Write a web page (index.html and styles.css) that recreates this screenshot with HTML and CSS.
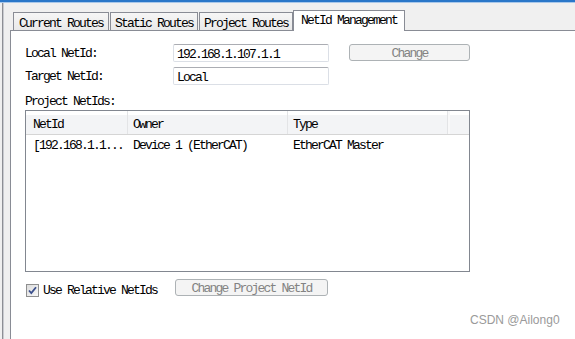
FILE: index.html
```html
<!DOCTYPE html>
<html lang="en">
<head>
    <meta charset="UTF-8" />
    <title>NetId Management</title>
    <link rel="stylesheet" href="styles.css">
</head>
<body>
    <div class="titlebar"></div>

    <div class="window">
        <div class="tabs">
            <div class="tab">Current Routes</div>
            <div class="tab">Static Routes</div>
            <div class="tab">Project Routes</div>
            <div class="tab active">NetId Management</div>
        </div>

        <div class="page">
            <div class="field">
                <span class="label">Local NetId:</span>
                <div class="input">192.168.1.107.1.1</div>
                <div class="btn btn-change">Change</div>
            </div>
            <div class="field">
                <span class="label">Target NetId:</span>
                <div class="input">Local</div>
            </div>

            <div class="caption">Project NetIds:</div>

            <div class="list">
                <div class="list-head">
                    <div class="col c1">NetId</div>
                    <div class="col c2">Owner</div>
                    <div class="col c3">Type</div>
                    <div class="col rest"></div>
                </div>
                <div class="list-row">
                    <div class="col c1">[192.168.1.1...</div>
                    <div class="col c2">Device 1 (EtherCAT)</div>
                    <div class="col c3">EtherCAT Master</div>
                </div>
            </div>

            <div class="bottom-row">
                <label class="check-group">
                    <span class="checkbox">
                        <svg width="11" height="11" viewBox="0 0 11 11">
                            <path d="M2 5.5 L4.3 8 L9 2.2" fill="none" stroke="#3b4f8c" stroke-width="1.8"/>
                        </svg>
                    </span>
                    <span>Use Relative NetIds</span>
                </label>
                <div class="btn btn-project">Change Project NetId</div>
            </div>
        </div>
    </div>

    <div class="watermark">CSDN @Ailong0</div>
</body>
</html>
```

FILE: styles.css
```css
:root {
    --panel: #f0f0f0;
    --edge: #898c95;
    --text: #000000;
    --muted: #838383;
}

body {
    margin: 0;
    width: 575px;
    height: 339px;
    overflow: hidden;
    position: relative;
    background: var(--panel);
    color: var(--text);
    font-family: "Liberation Mono", "DejaVu Sans Mono", monospace;
    font-size: 13px;
    letter-spacing: -1.8px;
}

.titlebar {
    height: 2px;
    background: #2a77c9;
    border-bottom: 1px solid #a9c8ea;
}

.window {
    height: 336px;
    margin-left: 2px;
    border-left: 1px solid #8d8f95;
    box-shadow: inset 1px 0 #c9cbd0;
    padding-left: 7px;
    display: flex;
    flex-direction: column;
}

/* tab strip */
.tabs {
    height: 27px;
    padding-left: 3px;
    display: flex;
    align-items: flex-end;
}

.tab {
    height: 14px;
    padding: 3px 4px 0 4px;
    line-height: 15px;
    border: 1px solid var(--edge);
    border-bottom: none;
    background: linear-gradient(#f6f6f6, #e9e9e9);
    margin-right: 1px;
    white-space: nowrap;
}

.tab:first-child {
    padding: 3px 5px 0 5px;
}

.tab.active {
    height: 18px;
    padding: 2px 7px 0 7px;
    background: #ffffff;
    margin-left: -1px;
    margin-bottom: -1px;
    position: relative;
    z-index: 1;
}

/* page */
.page {
    flex: 1;
    display: flex;
    flex-direction: column;
    align-items: flex-start;
    background: #ffffff;
    border-top: 1px solid var(--edge);
    border-left: 1px solid var(--edge);
    padding: 13px 0 0 14px;
}

.field {
    display: flex;
    align-items: flex-start;
    height: 18px;
    margin-bottom: 5px;
}

.label {
    width: 148px;
    line-height: 20px;
}

.input {
    box-sizing: border-box;
    width: 156px;
    height: 18px;
    line-height: 17px;
    padding: 1px 0 0 3px;
    border: 1px solid #dbdfe6;
    border-top-color: #abadb3;
    border-radius: 2px;
    overflow: hidden;
}

.btn {
    box-sizing: border-box;
    height: 17px;
    line-height: 16px;
    padding-top: 1px;
    text-align: center;
    color: var(--muted);
    background: #f4f4f4;
    border: 1px solid #adb2b5;
    border-radius: 3px;
}

.btn-change {
    width: 121px;
    margin-left: 20px;
}

.caption {
    margin-top: 4px;
    line-height: 16px;
}

/* list view */
.list {
    box-sizing: border-box;
    width: 445px;
    height: 162px;
    border: 1px solid #828790;
}

.list-head {
    display: flex;
    height: 23px;
    border-bottom: 1px solid #d5d5d5;
    background: linear-gradient(#ffffff 0, #ffffff 4px, #f3f4f6 4px);
}

.list-head .col {
    padding-top: 5px;
    line-height: 18px;
    border-right: 1px solid #e3e4e6;
}

.list-row {
    display: flex;
    height: 16px;
    line-height: 16px;
    margin-top: 3px;
}

.col {
    box-sizing: border-box;
    padding-left: 5px;
    white-space: nowrap;
}

.c1 { width: 102px; padding-left: 7px; }
.c2 { width: 160px; }
.c3 { width: 160px; }

.list-head .c3 {
    box-shadow: 2px 0 0 #f8f8f9;
}

.list-head .rest {
    flex: 1;
    border-right: none;
}

/* bottom controls */
.bottom-row {
    display: flex;
    align-items: flex-start;
    margin-top: 7px;
}

.check-group {
    width: 149px;
    margin-left: 1px;
    margin-top: 4px;
    display: flex;
    align-items: center;
    gap: 4px;
    line-height: 15px;
}

.checkbox {
    box-sizing: border-box;
    width: 13px;
    height: 13px;
    border: 1px solid #8f8f8f;
    background: linear-gradient(135deg, #dcdcdc, #f8f8f8);
    display: flex;
    align-items: center;
    justify-content: center;
}

.btn-project {
    width: 153px;
}

.watermark {
    position: absolute;
    left: 470px;
    top: 313px;
    font-family: "Liberation Sans", Arial, sans-serif;
    font-size: 12px;
    letter-spacing: 0;
    color: #9a9a9a;
}
```
